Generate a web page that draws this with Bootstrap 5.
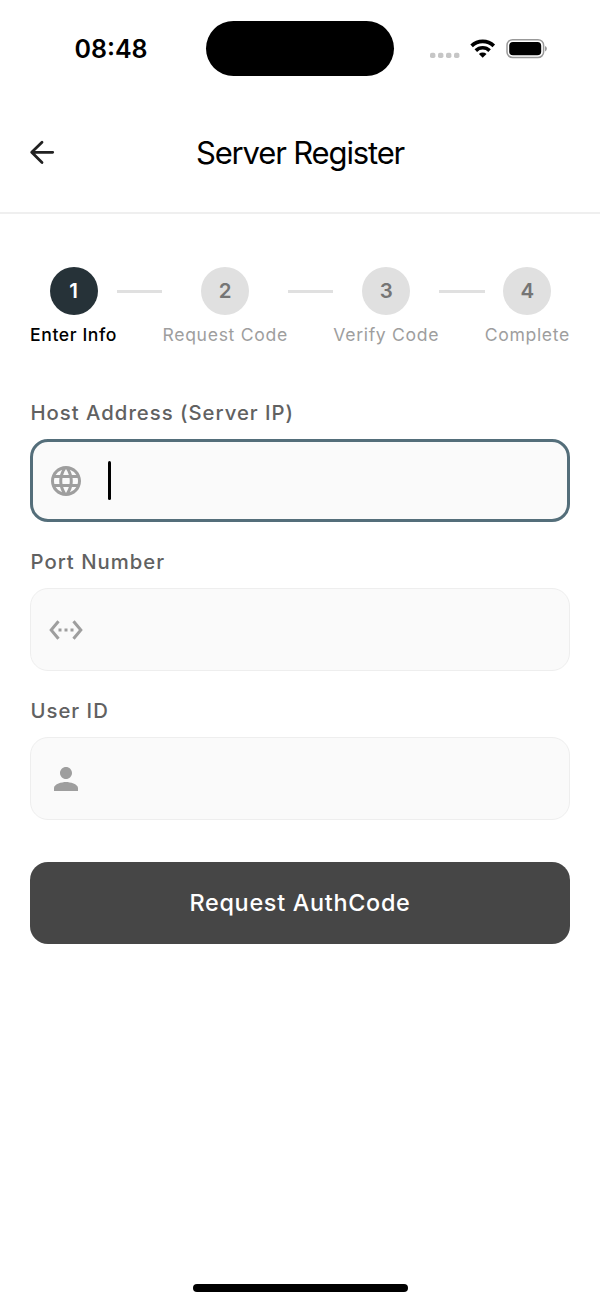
<!DOCTYPE html>
<html lang="en">
<head>
<meta charset="utf-8">
<meta name="viewport" content="width=device-width, initial-scale=1">
<title>Server Register</title>
<link href="https://cdn.jsdelivr.net/npm/bootstrap@5.3.0/dist/css/bootstrap.min.css" rel="stylesheet">
<style>
  body { font-family: Inter, "Liberation Sans", sans-serif; color: #000; background: #fff; }
  .screen { width: 600px; height: 1304px; overflow: hidden; }
  .status-bar { height: 96px; padding-top: 21px; }
  .island { width: 188px; height: 55px; border-radius: 28px; background: #000; }
  .status-side { width: 206px; height: 55px; }
  .clock { font-size: 25px; font-weight: 600; line-height: 57px; padding-left: 74.5px; }
  .status-icons { padding-left: 36px; }
  .app-bar { height: 118px; border-bottom: 2px solid #efefef; padding: 0 24px 5px; }
  .bar-slot { width: 36px; height: 36px; }
  .title { font-size: 31px; font-weight: 400; letter-spacing: -1.15px; line-height: 40px; padding-top: 2px; }
  .form-area { padding: 0 30px; }
  .steps { padding-top: 53px; height: 180px; }
  .step-dot { width: 48px; height: 48px; background: #e0e0e0; color: #757575; font-size: 20.5px; font-weight: 600; padding-top: 1px; }
  .step-text { font-size: 17.6px; line-height: 22px; margin-top: 9px; color: #9e9e9e; letter-spacing: .68px; white-space: nowrap; }
  .step.active .step-dot { background: #263238; color: #fff; }
  .step.active .step-text { color: #000; font-weight: 500; letter-spacing: .6px; }
  .step { flex: none; }
  .step-line { height: 3px; margin-top: 23px; background: #e0e0e0; }
  .field { height: 149px; padding-top: 6px; }
  .field-label { font-size: 20.3px; font-weight: 500; line-height: 26px; color: #616161; letter-spacing: 1px; margin-bottom: 13px; padding-left: .5px; }
  .field-box { height: 83px; border: 1.5px solid #eee; border-radius: 18px; background: #fafafa; padding-left: 17px; }
  .field-box.focused { border: 3px solid #546e7a; padding-left: 15px; }
  .caret { width: 3px; height: 39px; border-radius: 2px; background: #000; margin-left: 23.5px; }
  .submit { height: 82px; margin-top: 21px; border: 0; border-radius: 18px; background: #464646; color: #fff; font-size: 23.4px; font-weight: 500; letter-spacing: .7px; }
  .submit:hover { background: #464646; color: #fff; }
  .home-bar { width: 215px; height: 8px; border-radius: 4px; background: #000; margin-bottom: 12px; }
</style>
</head>
<body>
<div class="screen d-flex flex-column">
  <div class="status-bar d-flex">
    <div class="status-side clock"><span>08:48</span></div>
    <div class="island"></div>
    <div class="status-side status-icons d-flex align-items-center">
      <svg width="120" height="24" viewBox="430 37 120 24" aria-hidden="true">
        <g fill="#c6c6c6"><rect x="430" y="52.8" width="5.4" height="5.2" rx="1.8"/><rect x="438" y="52.8" width="5.4" height="5.2" rx="1.8"/><rect x="446" y="52.8" width="5.4" height="5.2" rx="1.8"/><rect x="454" y="52.8" width="5.4" height="5.2" rx="1.8"/></g>
        <g fill="none" stroke="#000" stroke-width="3.6"><path d="M471.6 45.9a15.8 15.8 0 0 1 22.2 0"/><path d="M475.8 50.6a9.8 9.8 0 0 1 13.8 0"/></g>
        <path d="M482.7 57.8l-3.8-3.8a5.6 5.6 0 0 1 7.6 0z"/>
        <rect x="507" y="39.7" width="36.6" height="17.8" rx="5.6" fill="none" stroke="#999" stroke-width="1.5"/>
        <rect x="509.2" y="41.9" width="32" height="13.4" rx="3.8"/>
        <path d="M545 46q1.9.8 1.9 2.7t-1.9 2.7z" fill="#999"/>
      </svg>
    </div>
  </div>
  <header class="app-bar d-flex align-items-center justify-content-between">
    <svg class="bar-slot" viewBox="0 0 36 36" fill="none" stroke="#212121" stroke-width="2.8" stroke-linecap="round" stroke-linejoin="round" role="img" aria-label="Back"><path d="M28.7 18.3H8M18 8.3L7.7 18.300l10.300 10.200"/></svg>
    <h1 class="title mb-0">Server Register</h1>
    <span class="bar-slot"></span>
  </header>
  <main class="form-area">
    <div class="steps d-flex">
      <div class="step active d-flex flex-column align-items-center"><div class="step-dot rounded-circle d-flex align-items-center justify-content-center">1</div><div class="step-text">Enter Info</div></div>
      <div class="step-line flex-fill"></div>
      <div class="step d-flex flex-column align-items-center"><div class="step-dot rounded-circle d-flex align-items-center justify-content-center">2</div><div class="step-text">Request Code</div></div>
      <div class="step-line flex-fill"></div>
      <div class="step d-flex flex-column align-items-center"><div class="step-dot rounded-circle d-flex align-items-center justify-content-center">3</div><div class="step-text">Verify Code</div></div>
      <div class="step-line flex-fill"></div>
      <div class="step d-flex flex-column align-items-center"><div class="step-dot rounded-circle d-flex align-items-center justify-content-center">4</div><div class="step-text">Complete</div></div>
    </div>
    <div class="field">
      <div class="field-label">Host Address (Server IP)</div>
      <div class="field-box focused d-flex align-items-center">
        <svg width="36" height="36" viewBox="0 0 24 24" fill="#9e9e9e" aria-hidden="true"><path d="M11.99 2C6.47 2 2 6.48 2 12s4.47 10 9.99 10C17.52 22 22 17.52 22 12S17.52 2 11.99 2zm6.93 6h-2.95a15.65 15.65 0 0 0-1.38-3.56A8.03 8.03 0 0 1 18.92 8zM12 4.04c.83 1.2 1.48 2.53 1.91 3.96h-3.82c.43-1.43 1.08-2.76 1.91-3.96zM4.26 14C4.1 13.36 4 12.69 4 12s.1-1.36.26-2h3.38c-.08.66-.14 1.32-.14 2s.06 1.34.14 2H4.26zm.82 2h2.95c.32 1.25.78 2.45 1.38 3.56A7.99 7.99 0 0 1 5.08 16zm2.95-8H5.08a7.99 7.99 0 0 1 4.33-3.56A15.65 15.65 0 0 0 8.03 8zM12 19.96c-.83-1.2-1.48-2.53-1.91-3.96h3.82c-.43 1.43-1.08 2.76-1.91 3.96zM14.34 14H9.66c-.09-.66-.16-1.32-.16-2s.07-1.35.16-2h4.68c.09.65.16 1.32.16 2s-.07 1.34-.16 2zm.25 5.56c.6-1.11 1.06-2.31 1.38-3.56h2.95a8.03 8.03 0 0 1-4.33 3.56zM16.36 14c.08-.66.14-1.32.14-2s-.06-1.34-.14-2h3.38c.16.64.26 1.31.26 2s-.1 1.36-.26 2h-3.38z"/></svg>
        <span class="caret"></span>
      </div>
    </div>
    <div class="field">
      <div class="field-label">Port Number</div>
      <div class="field-box d-flex align-items-center">
        <svg width="36" height="36" viewBox="0 0 24 24" fill="#9e9e9e" aria-hidden="true"><path d="M7.77 6.76L6.23 5.48.82 12l5.41 6.52 1.54-1.28L3.42 12l4.35-5.24zM7 13h2v-2H7v2zm10-2h-2v2h2v-2zm-6 2h2v-2h-2v2zm6.77-7.52l-1.54 1.28L20.58 12l-4.35 5.24 1.54 1.28L23.18 12l-5.41-6.52z"/></svg>
      </div>
    </div>
    <div class="field">
      <div class="field-label">User ID</div>
      <div class="field-box d-flex align-items-center">
        <svg width="36" height="36" viewBox="0 0 24 24" fill="#9e9e9e" aria-hidden="true"><path d="M12 12c2.21 0 4-1.79 4-4s-1.79-4-4-4-4 1.79-4 4 1.79 4 4 4zm0 2c-2.67 0-8 1.34-8 4v2h16v-2c0-2.66-5.33-4-8-4z"/></svg>
      </div>
    </div>
    <button type="button" class="submit btn w-100 p-0">Request AuthCode</button>
  </main>
  <div class="home-bar mx-auto mt-auto flex-shrink-0"></div>
</div>
<script src="https://cdn.jsdelivr.net/npm/bootstrap@5.3.0/dist/js/bootstrap.bundle.min.js"></script>
</body>
</html>
